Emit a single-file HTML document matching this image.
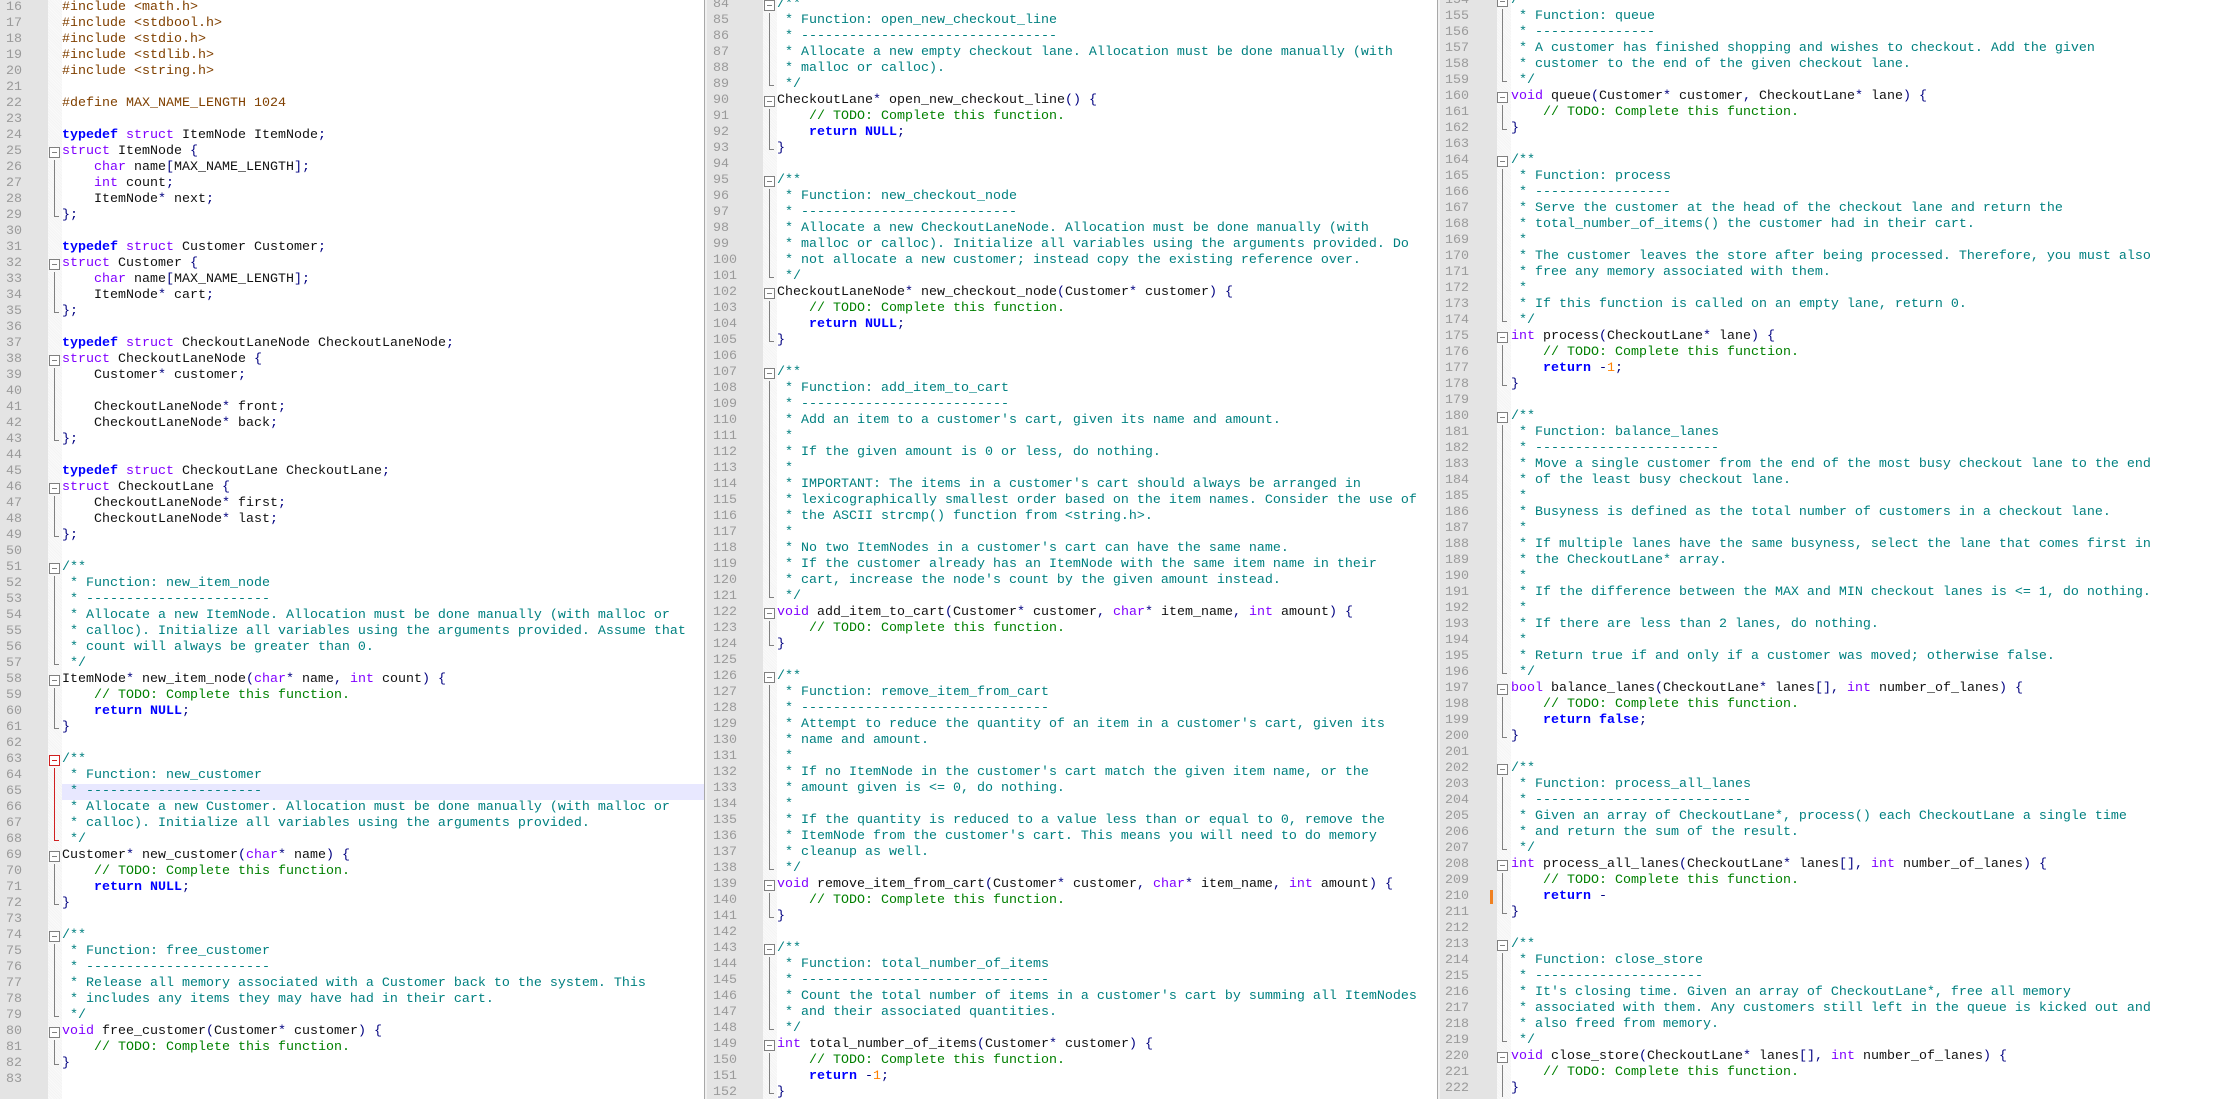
<!DOCTYPE html>
<html><head><meta charset="utf-8"><style>
html,body{margin:0;padding:0;width:2213px;height:1099px;overflow:hidden;background:#fff;}
.pane{position:absolute;top:0;height:1099px;overflow:hidden;background:#fff;font-family:"Liberation Mono",monospace;font-size:13.33px;color:#111;}
.gut{position:absolute;top:0;left:0;height:1099px;background:#e4e4e4;}
.fm{position:absolute;top:0;height:1099px;background:repeating-linear-gradient(45deg,#f4f4f4 0 1px,#fafafa 1px 2px);}
.inner{position:absolute;left:0;right:0;}
.l{position:relative;height:16px;line-height:16px;white-space:pre;}
.l i{position:absolute;left:0;font-style:normal;color:#9a9a9a;}
.l.b::before{content:"";position:absolute;left:var(--fx);top:3px;width:9px;height:9px;border:1px solid #808080;background:#fff;}
.l.b::after{content:"";position:absolute;left:calc(var(--fx) + 3px);top:8px;width:5px;height:1px;background:#808080;}
.l.v::before{content:"";position:absolute;left:calc(var(--fx) + 5px);top:0;width:1px;height:16px;background:#808080;}
.l.e::before{content:"";position:absolute;left:calc(var(--fx) + 5px);top:0;width:1px;height:9px;background:#808080;}
.l.e::after{content:"";position:absolute;left:calc(var(--fx) + 5px);top:8px;width:5px;height:1px;background:#808080;}
.red.l.b::before{border-color:#d02020;}
.red.l.b::after,.red.l.v::before,.red.l.e::before,.red.l.e::after{background:#d02020;}
.hl{background:linear-gradient(to right,transparent var(--tx),#e8e8ff var(--tx));}
.k{color:#0000ff;font-weight:bold}
.t{color:#8000ff}
.c{color:#008080}
.g{color:#008000}
.p{color:#804000}
.n{color:#ff8000}
.o{color:#000080}
#p1{left:0;width:705px;--fx:49px;--tx:62px;}
#p1 .l{padding-left:62px}
#p1 .l i{left:6px}
#p2{left:707px;width:731px;--fx:57px;--tx:70px;}
#p2 .l{padding-left:70px}
#p2 .l i{left:6px}
#p3{left:1440px;width:773px;--fx:57px;--tx:71px;}
#p3 .l{padding-left:71px}
#p3 .l i{left:5px}
.sep{position:absolute;top:0;height:1099px;width:2px;background:#f0f0f0;border-left:1px solid #a8a8a8;}
</style></head><body>

<div class="pane" id="p1">
<div class="gut" style="width:48px"></div><div class="fm" style="left:48px;width:14px"></div>
<div class="inner" style="top:0">
<div class="l"><i>16</i><span class="p">#include &lt;math.h&gt;</span></div>
<div class="l"><i>17</i><span class="p">#include &lt;stdbool.h&gt;</span></div>
<div class="l"><i>18</i><span class="p">#include &lt;stdio.h&gt;</span></div>
<div class="l"><i>19</i><span class="p">#include &lt;stdlib.h&gt;</span></div>
<div class="l"><i>20</i><span class="p">#include &lt;string.h&gt;</span></div>
<div class="l"><i>21</i></div>
<div class="l"><i>22</i><span class="p">#define MAX_NAME_LENGTH 1024</span></div>
<div class="l"><i>23</i></div>
<div class="l"><i>24</i><span class="k">typedef</span> <span class="t">struct</span> ItemNode ItemNode<span class="o">;</span></div>
<div class="l b"><i>25</i><span class="t">struct</span> ItemNode <span class="o">{</span></div>
<div class="l v"><i>26</i>    <span class="t">char</span> name<span class="o">[</span>MAX_NAME_LENGTH<span class="o">];</span></div>
<div class="l v"><i>27</i>    <span class="t">int</span> count<span class="o">;</span></div>
<div class="l v"><i>28</i>    ItemNode<span class="o">*</span> next<span class="o">;</span></div>
<div class="l e"><i>29</i><span class="o">};</span></div>
<div class="l"><i>30</i></div>
<div class="l"><i>31</i><span class="k">typedef</span> <span class="t">struct</span> Customer Customer<span class="o">;</span></div>
<div class="l b"><i>32</i><span class="t">struct</span> Customer <span class="o">{</span></div>
<div class="l v"><i>33</i>    <span class="t">char</span> name<span class="o">[</span>MAX_NAME_LENGTH<span class="o">];</span></div>
<div class="l v"><i>34</i>    ItemNode<span class="o">*</span> cart<span class="o">;</span></div>
<div class="l e"><i>35</i><span class="o">};</span></div>
<div class="l"><i>36</i></div>
<div class="l"><i>37</i><span class="k">typedef</span> <span class="t">struct</span> CheckoutLaneNode CheckoutLaneNode<span class="o">;</span></div>
<div class="l b"><i>38</i><span class="t">struct</span> CheckoutLaneNode <span class="o">{</span></div>
<div class="l v"><i>39</i>    Customer<span class="o">*</span> customer<span class="o">;</span></div>
<div class="l v"><i>40</i></div>
<div class="l v"><i>41</i>    CheckoutLaneNode<span class="o">*</span> front<span class="o">;</span></div>
<div class="l v"><i>42</i>    CheckoutLaneNode<span class="o">*</span> back<span class="o">;</span></div>
<div class="l e"><i>43</i><span class="o">};</span></div>
<div class="l"><i>44</i></div>
<div class="l"><i>45</i><span class="k">typedef</span> <span class="t">struct</span> CheckoutLane CheckoutLane<span class="o">;</span></div>
<div class="l b"><i>46</i><span class="t">struct</span> CheckoutLane <span class="o">{</span></div>
<div class="l v"><i>47</i>    CheckoutLaneNode<span class="o">*</span> first<span class="o">;</span></div>
<div class="l v"><i>48</i>    CheckoutLaneNode<span class="o">*</span> last<span class="o">;</span></div>
<div class="l e"><i>49</i><span class="o">};</span></div>
<div class="l"><i>50</i></div>
<div class="l b"><i>51</i><span class="c">/**</span></div>
<div class="l v"><i>52</i><span class="c"> * Function: new_item_node</span></div>
<div class="l v"><i>53</i><span class="c"> * -----------------------</span></div>
<div class="l v"><i>54</i><span class="c"> * Allocate a new ItemNode. Allocation must be done manually (with malloc or</span></div>
<div class="l v"><i>55</i><span class="c"> * calloc). Initialize all variables using the arguments provided. Assume that</span></div>
<div class="l v"><i>56</i><span class="c"> * count will always be greater than 0.</span></div>
<div class="l e"><i>57</i><span class="c"> */</span></div>
<div class="l b"><i>58</i>ItemNode<span class="o">*</span> new_item_node<span class="o">(</span><span class="t">char</span><span class="o">*</span> name<span class="o">,</span> <span class="t">int</span> count<span class="o">)</span> <span class="o">{</span></div>
<div class="l v"><i>59</i>    <span class="g">// TODO: Complete this function.</span></div>
<div class="l v"><i>60</i>    <span class="k">return</span> <span class="k">NULL</span><span class="o">;</span></div>
<div class="l e"><i>61</i><span class="o">}</span></div>
<div class="l"><i>62</i></div>
<div class="l b red"><i>63</i><span class="c">/**</span></div>
<div class="l v red"><i>64</i><span class="c"> * Function: new_customer</span></div>
<div class="l v red hl"><i>65</i><span class="c"> * ----------------------</span></div>
<div class="l v red"><i>66</i><span class="c"> * Allocate a new Customer. Allocation must be done manually (with malloc or</span></div>
<div class="l v red"><i>67</i><span class="c"> * calloc). Initialize all variables using the arguments provided.</span></div>
<div class="l e red"><i>68</i><span class="c"> */</span></div>
<div class="l b"><i>69</i>Customer<span class="o">*</span> new_customer<span class="o">(</span><span class="t">char</span><span class="o">*</span> name<span class="o">)</span> <span class="o">{</span></div>
<div class="l v"><i>70</i>    <span class="g">// TODO: Complete this function.</span></div>
<div class="l v"><i>71</i>    <span class="k">return</span> <span class="k">NULL</span><span class="o">;</span></div>
<div class="l e"><i>72</i><span class="o">}</span></div>
<div class="l"><i>73</i></div>
<div class="l b"><i>74</i><span class="c">/**</span></div>
<div class="l v"><i>75</i><span class="c"> * Function: free_customer</span></div>
<div class="l v"><i>76</i><span class="c"> * -----------------------</span></div>
<div class="l v"><i>77</i><span class="c"> * Release all memory associated with a Customer back to the system. This</span></div>
<div class="l v"><i>78</i><span class="c"> * includes any items they may have had in their cart.</span></div>
<div class="l e"><i>79</i><span class="c"> */</span></div>
<div class="l b"><i>80</i><span class="t">void</span> free_customer<span class="o">(</span>Customer<span class="o">*</span> customer<span class="o">)</span> <span class="o">{</span></div>
<div class="l v"><i>81</i>    <span class="g">// TODO: Complete this function.</span></div>
<div class="l e"><i>82</i><span class="o">}</span></div>
<div class="l"><i>83</i></div>
</div></div>

<div class="sep" style="left:704px"></div>

<div class="pane" id="p2">
<div class="gut" style="width:56px"></div><div class="fm" style="left:56px;width:14px"></div>
<div class="inner" style="top:-3px">
<div class="l b"><i>84</i><span class="c">/**</span></div>
<div class="l v"><i>85</i><span class="c"> * Function: open_new_checkout_line</span></div>
<div class="l v"><i>86</i><span class="c"> * --------------------------------</span></div>
<div class="l v"><i>87</i><span class="c"> * Allocate a new empty checkout lane. Allocation must be done manually (with</span></div>
<div class="l v"><i>88</i><span class="c"> * malloc or calloc).</span></div>
<div class="l e"><i>89</i><span class="c"> */</span></div>
<div class="l b"><i>90</i>CheckoutLane<span class="o">*</span> open_new_checkout_line<span class="o">()</span> <span class="o">{</span></div>
<div class="l v"><i>91</i>    <span class="g">// TODO: Complete this function.</span></div>
<div class="l v"><i>92</i>    <span class="k">return</span> <span class="k">NULL</span><span class="o">;</span></div>
<div class="l e"><i>93</i><span class="o">}</span></div>
<div class="l"><i>94</i></div>
<div class="l b"><i>95</i><span class="c">/**</span></div>
<div class="l v"><i>96</i><span class="c"> * Function: new_checkout_node</span></div>
<div class="l v"><i>97</i><span class="c"> * ---------------------------</span></div>
<div class="l v"><i>98</i><span class="c"> * Allocate a new CheckoutLaneNode. Allocation must be done manually (with</span></div>
<div class="l v"><i>99</i><span class="c"> * malloc or calloc). Initialize all variables using the arguments provided. Do</span></div>
<div class="l v"><i>100</i><span class="c"> * not allocate a new customer; instead copy the existing reference over.</span></div>
<div class="l e"><i>101</i><span class="c"> */</span></div>
<div class="l b"><i>102</i>CheckoutLaneNode<span class="o">*</span> new_checkout_node<span class="o">(</span>Customer<span class="o">*</span> customer<span class="o">)</span> <span class="o">{</span></div>
<div class="l v"><i>103</i>    <span class="g">// TODO: Complete this function.</span></div>
<div class="l v"><i>104</i>    <span class="k">return</span> <span class="k">NULL</span><span class="o">;</span></div>
<div class="l e"><i>105</i><span class="o">}</span></div>
<div class="l"><i>106</i></div>
<div class="l b"><i>107</i><span class="c">/**</span></div>
<div class="l v"><i>108</i><span class="c"> * Function: add_item_to_cart</span></div>
<div class="l v"><i>109</i><span class="c"> * --------------------------</span></div>
<div class="l v"><i>110</i><span class="c"> * Add an item to a customer's cart, given its name and amount.</span></div>
<div class="l v"><i>111</i><span class="c"> *</span></div>
<div class="l v"><i>112</i><span class="c"> * If the given amount is 0 or less, do nothing.</span></div>
<div class="l v"><i>113</i><span class="c"> *</span></div>
<div class="l v"><i>114</i><span class="c"> * IMPORTANT: The items in a customer's cart should always be arranged in</span></div>
<div class="l v"><i>115</i><span class="c"> * lexicographically smallest order based on the item names. Consider the use of</span></div>
<div class="l v"><i>116</i><span class="c"> * the ASCII strcmp() function from &lt;string.h&gt;.</span></div>
<div class="l v"><i>117</i><span class="c"> *</span></div>
<div class="l v"><i>118</i><span class="c"> * No two ItemNodes in a customer's cart can have the same name.</span></div>
<div class="l v"><i>119</i><span class="c"> * If the customer already has an ItemNode with the same item name in their</span></div>
<div class="l v"><i>120</i><span class="c"> * cart, increase the node's count by the given amount instead.</span></div>
<div class="l e"><i>121</i><span class="c"> */</span></div>
<div class="l b"><i>122</i><span class="t">void</span> add_item_to_cart<span class="o">(</span>Customer<span class="o">*</span> customer<span class="o">,</span> <span class="t">char</span><span class="o">*</span> item_name<span class="o">,</span> <span class="t">int</span> amount<span class="o">)</span> <span class="o">{</span></div>
<div class="l v"><i>123</i>    <span class="g">// TODO: Complete this function.</span></div>
<div class="l e"><i>124</i><span class="o">}</span></div>
<div class="l"><i>125</i></div>
<div class="l b"><i>126</i><span class="c">/**</span></div>
<div class="l v"><i>127</i><span class="c"> * Function: remove_item_from_cart</span></div>
<div class="l v"><i>128</i><span class="c"> * -------------------------------</span></div>
<div class="l v"><i>129</i><span class="c"> * Attempt to reduce the quantity of an item in a customer's cart, given its</span></div>
<div class="l v"><i>130</i><span class="c"> * name and amount.</span></div>
<div class="l v"><i>131</i><span class="c"> *</span></div>
<div class="l v"><i>132</i><span class="c"> * If no ItemNode in the customer's cart match the given item name, or the</span></div>
<div class="l v"><i>133</i><span class="c"> * amount given is &lt;= 0, do nothing.</span></div>
<div class="l v"><i>134</i><span class="c"> *</span></div>
<div class="l v"><i>135</i><span class="c"> * If the quantity is reduced to a value less than or equal to 0, remove the</span></div>
<div class="l v"><i>136</i><span class="c"> * ItemNode from the customer's cart. This means you will need to do memory</span></div>
<div class="l v"><i>137</i><span class="c"> * cleanup as well.</span></div>
<div class="l e"><i>138</i><span class="c"> */</span></div>
<div class="l b"><i>139</i><span class="t">void</span> remove_item_from_cart<span class="o">(</span>Customer<span class="o">*</span> customer<span class="o">,</span> <span class="t">char</span><span class="o">*</span> item_name<span class="o">,</span> <span class="t">int</span> amount<span class="o">)</span> <span class="o">{</span></div>
<div class="l v"><i>140</i>    <span class="g">// TODO: Complete this function.</span></div>
<div class="l e"><i>141</i><span class="o">}</span></div>
<div class="l"><i>142</i></div>
<div class="l b"><i>143</i><span class="c">/**</span></div>
<div class="l v"><i>144</i><span class="c"> * Function: total_number_of_items</span></div>
<div class="l v"><i>145</i><span class="c"> * -------------------------------</span></div>
<div class="l v"><i>146</i><span class="c"> * Count the total number of items in a customer's cart by summing all ItemNodes</span></div>
<div class="l v"><i>147</i><span class="c"> * and their associated quantities.</span></div>
<div class="l e"><i>148</i><span class="c"> */</span></div>
<div class="l b"><i>149</i><span class="t">int</span> total_number_of_items<span class="o">(</span>Customer<span class="o">*</span> customer<span class="o">)</span> <span class="o">{</span></div>
<div class="l v"><i>150</i>    <span class="g">// TODO: Complete this function.</span></div>
<div class="l v"><i>151</i>    <span class="k">return</span> <span class="o">-</span><span class="n">1</span><span class="o">;</span></div>
<div class="l e"><i>152</i><span class="o">}</span></div>
</div></div>

<div class="sep" style="left:1437px"></div>

<div class="pane" id="p3">
<div class="gut" style="width:57px"></div><div class="fm" style="left:57px;width:14px"></div>
<div class="inner" style="top:-7px">
<div class="l b"><i>154</i><span class="c">/**</span></div>
<div class="l v"><i>155</i><span class="c"> * Function: queue</span></div>
<div class="l v"><i>156</i><span class="c"> * ---------------</span></div>
<div class="l v"><i>157</i><span class="c"> * A customer has finished shopping and wishes to checkout. Add the given</span></div>
<div class="l v"><i>158</i><span class="c"> * customer to the end of the given checkout lane.</span></div>
<div class="l e"><i>159</i><span class="c"> */</span></div>
<div class="l b"><i>160</i><span class="t">void</span> queue<span class="o">(</span>Customer<span class="o">*</span> customer<span class="o">,</span> CheckoutLane<span class="o">*</span> lane<span class="o">)</span> <span class="o">{</span></div>
<div class="l v"><i>161</i>    <span class="g">// TODO: Complete this function.</span></div>
<div class="l e"><i>162</i><span class="o">}</span></div>
<div class="l"><i>163</i></div>
<div class="l b"><i>164</i><span class="c">/**</span></div>
<div class="l v"><i>165</i><span class="c"> * Function: process</span></div>
<div class="l v"><i>166</i><span class="c"> * -----------------</span></div>
<div class="l v"><i>167</i><span class="c"> * Serve the customer at the head of the checkout lane and return the</span></div>
<div class="l v"><i>168</i><span class="c"> * total_number_of_items() the customer had in their cart.</span></div>
<div class="l v"><i>169</i><span class="c"> *</span></div>
<div class="l v"><i>170</i><span class="c"> * The customer leaves the store after being processed. Therefore, you must also</span></div>
<div class="l v"><i>171</i><span class="c"> * free any memory associated with them.</span></div>
<div class="l v"><i>172</i><span class="c"> *</span></div>
<div class="l v"><i>173</i><span class="c"> * If this function is called on an empty lane, return 0.</span></div>
<div class="l e"><i>174</i><span class="c"> */</span></div>
<div class="l b"><i>175</i><span class="t">int</span> process<span class="o">(</span>CheckoutLane<span class="o">*</span> lane<span class="o">)</span> <span class="o">{</span></div>
<div class="l v"><i>176</i>    <span class="g">// TODO: Complete this function.</span></div>
<div class="l v"><i>177</i>    <span class="k">return</span> <span class="o">-</span><span class="n">1</span><span class="o">;</span></div>
<div class="l e"><i>178</i><span class="o">}</span></div>
<div class="l"><i>179</i></div>
<div class="l b"><i>180</i><span class="c">/**</span></div>
<div class="l v"><i>181</i><span class="c"> * Function: balance_lanes</span></div>
<div class="l v"><i>182</i><span class="c"> * -----------------------</span></div>
<div class="l v"><i>183</i><span class="c"> * Move a single customer from the end of the most busy checkout lane to the end</span></div>
<div class="l v"><i>184</i><span class="c"> * of the least busy checkout lane.</span></div>
<div class="l v"><i>185</i><span class="c"> *</span></div>
<div class="l v"><i>186</i><span class="c"> * Busyness is defined as the total number of customers in a checkout lane.</span></div>
<div class="l v"><i>187</i><span class="c"> *</span></div>
<div class="l v"><i>188</i><span class="c"> * If multiple lanes have the same busyness, select the lane that comes first in</span></div>
<div class="l v"><i>189</i><span class="c"> * the CheckoutLane* array.</span></div>
<div class="l v"><i>190</i><span class="c"> *</span></div>
<div class="l v"><i>191</i><span class="c"> * If the difference between the MAX and MIN checkout lanes is &lt;= 1, do nothing.</span></div>
<div class="l v"><i>192</i><span class="c"> *</span></div>
<div class="l v"><i>193</i><span class="c"> * If there are less than 2 lanes, do nothing.</span></div>
<div class="l v"><i>194</i><span class="c"> *</span></div>
<div class="l v"><i>195</i><span class="c"> * Return true if and only if a customer was moved; otherwise false.</span></div>
<div class="l e"><i>196</i><span class="c"> */</span></div>
<div class="l b"><i>197</i><span class="t">bool</span> balance_lanes<span class="o">(</span>CheckoutLane<span class="o">*</span> lanes<span class="o">[],</span> <span class="t">int</span> number_of_lanes<span class="o">)</span> <span class="o">{</span></div>
<div class="l v"><i>198</i>    <span class="g">// TODO: Complete this function.</span></div>
<div class="l v"><i>199</i>    <span class="k">return</span> <span class="k">false</span><span class="o">;</span></div>
<div class="l e"><i>200</i><span class="o">}</span></div>
<div class="l"><i>201</i></div>
<div class="l b"><i>202</i><span class="c">/**</span></div>
<div class="l v"><i>203</i><span class="c"> * Function: process_all_lanes</span></div>
<div class="l v"><i>204</i><span class="c"> * ---------------------------</span></div>
<div class="l v"><i>205</i><span class="c"> * Given an array of CheckoutLane*, process() each CheckoutLane a single time</span></div>
<div class="l v"><i>206</i><span class="c"> * and return the sum of the result.</span></div>
<div class="l e"><i>207</i><span class="c"> */</span></div>
<div class="l b"><i>208</i><span class="t">int</span> process_all_lanes<span class="o">(</span>CheckoutLane<span class="o">*</span> lanes<span class="o">[],</span> <span class="t">int</span> number_of_lanes<span class="o">)</span> <span class="o">{</span></div>
<div class="l v"><i>209</i>    <span class="g">// TODO: Complete this function.</span></div>
<div class="l v"><i>210</i><span style="position:absolute;left:50px;top:1px;width:3px;height:14px;background:#f08020"></span>    <span class="k">return</span> <span class="o">-</span></div>
<div class="l e"><i>211</i><span class="o">}</span></div>
<div class="l"><i>212</i></div>
<div class="l b"><i>213</i><span class="c">/**</span></div>
<div class="l v"><i>214</i><span class="c"> * Function: close_store</span></div>
<div class="l v"><i>215</i><span class="c"> * ---------------------</span></div>
<div class="l v"><i>216</i><span class="c"> * It's closing time. Given an array of CheckoutLane*, free all memory</span></div>
<div class="l v"><i>217</i><span class="c"> * associated with them. Any customers still left in the queue is kicked out and</span></div>
<div class="l v"><i>218</i><span class="c"> * also freed from memory.</span></div>
<div class="l e"><i>219</i><span class="c"> */</span></div>
<div class="l b"><i>220</i><span class="t">void</span> close_store<span class="o">(</span>CheckoutLane<span class="o">*</span> lanes<span class="o">[],</span> <span class="t">int</span> number_of_lanes<span class="o">)</span> <span class="o">{</span></div>
<div class="l v"><i>221</i>    <span class="g">// TODO: Complete this function.</span></div>
<div class="l v"><i>222</i><span class="o">}</span></div>
</div></div>
</body></html>
